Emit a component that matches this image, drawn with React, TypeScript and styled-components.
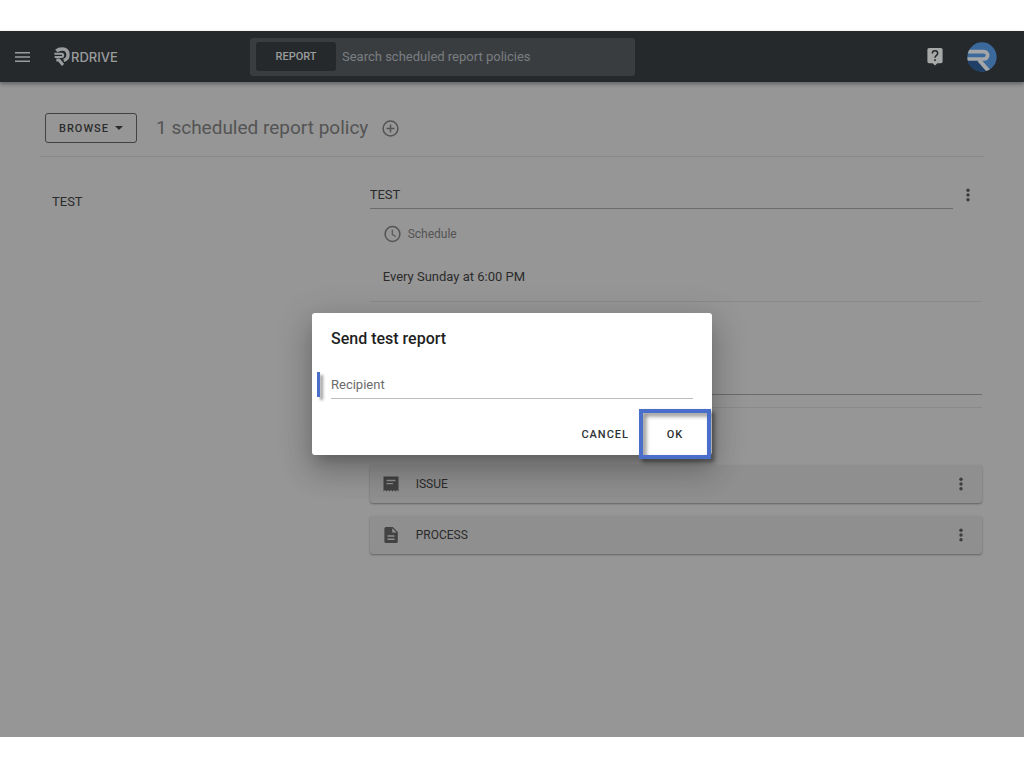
import React from 'react';
import styled, { createGlobalStyle } from 'styled-components';

const color = {
  page: '#969696',
  bar: '#25292c',
  barField: '#393d40',
  barText: '#9b9c9d',
  barHint: '#7b7e80',
  text: '#2b2b2b',
  muted: '#545454',
  rule: '#8a8a8a',
  fieldLine: '#6c6c6c',
  card: '#8f8f8f',
  accent: '#4a6fcb',
};

const GlobalStyle = createGlobalStyle`
  *, *::before, *::after { box-sizing: border-box; }
  body { margin: 0; background: #ffffff; }
  body, button, input { font-family: Roboto, "Liberation Sans", sans-serif; }
  h1, h2, p, ul { margin: 0; padding: 0; font-weight: 400; }
  ul { list-style: none; }
`;

const Frame = styled.div`
  position: relative;
  display: flex;
  flex-direction: column;
  min-height: calc(100vh - 62px);
  margin: 31px 0;
  background: ${color.page};
  color: ${color.text};
`;

const AppBar = styled.header`
  display: flex;
  align-items: center;
  height: 51px;
  padding: 0 27px 0 15px;
  background: ${color.bar};
  box-shadow: 0 2px 4px rgba(0, 0, 0, 0.35);
`;

const Brand = styled.div`
  display: flex;
  align-items: center;
  flex: 0 0 235px;
  gap: 24px;
`;

const IconButton = styled.button<{ $tone?: string }>`
  display: flex;
  align-items: center;
  justify-content: center;
  padding: 0;
  border: 0;
  background: none;
  color: ${(p) => p.$tone ?? color.muted};
`;

const Logo = styled.a`
  display: flex;
  align-items: center;
  color: ${color.barText};
  font: 500 13px/20px Inter, Roboto, sans-serif;
  text-decoration: none;
`;

const SearchBox = styled.div`
  display: flex;
  align-items: center;
  flex: 0 1 385px;
  height: 38px;
  padding: 0 6px;
  gap: 6px;
  border-radius: 3px;
  background: ${color.barField};
`;

const ScopeButton = styled.button`
  flex: none;
  width: 80px;
  height: 29px;
  padding: 0;
  border: 0;
  border-radius: 3px;
  background: ${color.bar};
  color: ${color.barText};
  font-size: 11px;
  font-weight: 500;
`;

const SearchInput = styled.input`
  flex: 1;
  min-width: 0;
  padding: 0;
  border: 0;
  outline: 0;
  background: none;
  color: ${color.barText};
  font-size: 13px;
  &::placeholder { color: ${color.barHint}; opacity: 1; }
`;

const BarActions = styled.div`
  display: flex;
  align-items: center;
  gap: 24px;
  margin-left: auto;
`;

const Main = styled.main`
  flex: 1;
  padding: 0 40px 24px;
`;

const Toolbar = styled.div`
  display: flex;
  align-items: center;
  height: 75px;
  padding: 18px 5px 0;
  border-bottom: 1px solid ${color.rule};
`;

const BrowseButton = styled.button`
  display: flex;
  align-items: center;
  justify-content: center;
  gap: 6px;
  width: 92px;
  height: 30px;
  padding: 0;
  border: 1px solid #424242;
  border-radius: 3px;
  background: none;
  color: ${color.text};
  font-size: 11px;
  font-weight: 500;
  letter-spacing: 1px;
`;

const PageTitle = styled.h1`
  margin: 0 14px 0 19px;
  color: ${color.muted};
  font-size: 19px;
  line-height: 24px;
`;

const Columns = styled.div`
  display: grid;
  grid-template-columns: 35% minmax(0, 1fr);
  padding-right: 2px;
`;

const PolicyList = styled.ul`
  padding: 35px 12px 0;
  font-size: 13px;
  line-height: 20px;
`;

const Detail = styled.section`
  padding-top: 23px;
`;

const NameRow = styled.div`
  display: flex;
  align-items: center;
  padding-right: 10px;
  gap: 11px;
`;

const NameInput = styled.input`
  flex: 1;
  min-width: 0;
  height: 29px;
  padding: 0;
  border: 0;
  border-bottom: 1px solid ${color.fieldLine};
  border-radius: 0;
  outline: 0;
  background: none;
  color: ${color.text};
  font-size: 13px;
`;

const Section = styled.div`
  height: 93px;
  padding: 14px 13px 0;
  border-bottom: 1px solid ${color.rule};
`;

const SectionLabel = styled.h2`
  display: flex;
  align-items: center;
  gap: 6px;
  height: 22px;
  color: ${color.muted};
  font-size: 12px;
`;

const SectionText = styled.p`
  margin-top: 22px;
  font-size: 13px;
  line-height: 20px;
`;

const RecipientSection = styled.div`
  height: 106px;
  padding-bottom: 12px;
  border-bottom: 1px solid ${color.rule};
`;

const RecipientLine = styled.div`
  height: 93px;
  border-bottom: 1px solid ${color.fieldLine};
`;

const CardList = styled.ul`
  display: flex;
  flex-direction: column;
  gap: 13px;
  padding-top: 57px;
`;

const Card = styled.li`
  display: flex;
  align-items: center;
  height: 38px;
  padding: 0 17px 0 12px;
  border-radius: 3px;
  background: ${color.card};
  box-shadow: 0 1px 2px rgba(0, 0, 0, 0.35);
  font-size: 12px;
`;

const CardLabel = styled.span`
  flex: 1;
  margin-left: 16px;
`;

const Scrim = styled.div`
  position: absolute;
  inset: 0;
  display: flex;
  align-items: center;
  justify-content: center;
`;

const Dialog = styled.form`
  width: 400px;
  height: 142px;
  padding: 14px 1px 0 19px;
  border-radius: 3px;
  background: #ffffff;
  box-shadow: 0 9px 12px -5px rgba(0, 0, 0, 0.2), 0 18px 28px 2px rgba(0, 0, 0, 0.14),
    0 7px 34px 6px rgba(0, 0, 0, 0.12);
`;

const DialogTitle = styled.h2`
  color: #1f1f1f;
  font-size: 16px;
  font-weight: 500;
  line-height: 24px;
`;

const RecipientField = styled.label`
  position: relative;
  display: block;
  margin: 20px 18px 0 0;
  &::before {
    content: '';
    position: absolute;
    left: -14px;
    top: 1px;
    width: 3px;
    height: 25px;
    background: ${color.accent};
    box-shadow: 3px 3px 3px rgba(0, 0, 0, 0.4);
  }
`;

const RecipientInput = styled.input`
  display: block;
  width: 100%;
  height: 28px;
  padding: 0;
  border: 0;
  border-bottom: 1px solid #bdbdbd;
  border-radius: 0;
  outline: 0;
  background: none;
  font-size: 13px;
  &::placeholder { color: #6b6b6b; opacity: 1; }
`;

const DialogActions = styled.div`
  display: flex;
  align-items: center;
  justify-content: flex-end;
  gap: 10px;
  padding-top: 10px;
`;

const DialogButton = styled.button<{ $marked?: boolean }>`
  position: relative;
  width: ${(p) => (p.$marked ? '72px' : 'auto')};
  height: 50px;
  padding: 1px 0 0;
  border: 0;
  background: none;
  color: #2d3134;
  font-size: 11px;
  font-weight: 500;
  letter-spacing: 1px;
  &::after {
    content: '';
    display: ${(p) => (p.$marked ? 'block' : 'none')};
    position: absolute;
    inset: 0;
    border: 4px solid ${color.accent};
    filter: drop-shadow(3px 3px 2px rgba(0, 0, 0, 0.5));
  }
`;

const MenuIcon = () => (
  <svg width="15" height="12" viewBox="0 0 15 12" fill="currentColor" aria-hidden="true">
    <path d="M0 1h15v1.6H0zM0 5.2h15v1.6H0zM0 9.4h15v1.6H0z" />
  </svg>
);

const LogoMark = () => (
  <svg width="17" height="20" viewBox="0 0 51 60" fill="none" stroke="currentColor" aria-hidden="true">
    <path d="M7 12C12 7 18 6 25 6C37 6 42 14 42 24C42 33 37 38 29 40" strokeWidth="10" />
    <path d="M1 20H23C29 20 29 30 23 30H2" strokeWidth="6" />
    <path d="M7 39H15L27 54" strokeWidth="9" />
  </svg>
);

const HelpIcon = () => (
  <svg width="16" height="18" viewBox="0 0 16 18" aria-hidden="true">
    <path d="M2 0h12a1.6 1.6 0 0 1 1.6 1.6v12a1.6 1.6 0 0 1-1.6 1.6h-3.6L8 17.6l-2.400-2.400H2A1.600 1.600 0 0 1 .4 13.600v-12A1.600 1.600 0 0 1 2 0z" fill="#a7a8a8" />
    <path d="M5.300 5.400a2.700 2.700 0 0 1 5.400 0c0 1.900-2.700 2-2.700 4.300" fill="none" stroke="#25292c" strokeWidth="1.500" />
    <path d="M7.200 11.300h1.600v1.600H7.200z" fill="#25292c" />
  </svg>
);

const Avatar = () => (
  <svg width="30" height="30" viewBox="0 0 90 90" aria-hidden="true">
    <defs>
      <clipPath id="avatar-disc"><circle cx="45" cy="45" r="44" /></clipPath>
    </defs>
    <g clipPath="url(#avatar-disc)">
      <rect width="90" height="90" fill="#3c699c" />
      <path d="M0 50H36L68 90H0z" fill="#1f3f66" />
      <path d="M0 29H50C66 29 66 51 50 51H0" fill="none" stroke="#a5a6a7" strokeWidth="11" />
      <path d="M36 54L65 87" stroke="#a5a6a7" strokeWidth="12" />
    </g>
  </svg>
);

const CaretIcon = () => (
  <svg width="8" height="4" viewBox="0 0 8 4" fill="currentColor" aria-hidden="true">
    <path d="M0 0h8L4 4z" />
  </svg>
);

const AddIcon = () => (
  <svg width="17" height="17" viewBox="0 0 17 17" fill="none" stroke="currentColor" strokeWidth="1.500" aria-hidden="true">
    <circle cx="8.500" cy="8.500" r="7.400" />
    <path d="M8.500 4.500v8M4.500 8.500h8" />
  </svg>
);

const ClockIcon = () => (
  <svg width="19" height="18" viewBox="0 0 19 18" fill="none" stroke="currentColor" strokeWidth="1.500" aria-hidden="true">
    <circle cx="9.500" cy="9" r="7.400" />
    <path d="M9.300 4.800v4.600l3.300 2" strokeWidth="1.200" />
  </svg>
);

const MoreIcon = () => (
  <svg width="8" height="14" viewBox="0 0 8 14" fill="#3d3d3d" aria-hidden="true">
    <circle cx="4" cy="2.200" r="1.700" />
    <circle cx="4" cy="7" r="1.700" />
    <circle cx="4" cy="11.800" r="1.700" />
  </svg>
);

const IssueIcon = () => (
  <svg width="18" height="18" viewBox="0 0 18 18" aria-hidden="true">
    <path d="M1.500 1.500h15v15l-1.500-1.500-1.500 1.500-1.500-1.500-1.500 1.500-1.500-1.500-1.500 1.500-1.500-1.500-1.500 1.500-1.500-1.500-1.500 1.500z" fill="#424242" />
    <path d="M4.500 5.500h9M4.500 8.600h6.500" stroke="#8f8f8f" strokeWidth="1.400" />
  </svg>
);

const ProcessIcon = () => (
  <svg width="18" height="18" viewBox="0 0 18 18" aria-hidden="true">
    <path d="M4 1h6.800l5 5v9.400a1.600 1.600 0 0 1-1.600 1.600H4a1.600 1.600 0 0 1-1.600-1.600V2.600A1.600 1.600 0 0 1 4 1z" fill="#424242" />
    <path d="M10.200 2.200v4.400h4.400z" fill="#8f8f8f" />
    <path d="M5.500 10h7M5.500 13.200h7" stroke="#8f8f8f" strokeWidth="1.400" />
  </svg>
);

const policyItems = [
  { name: 'ISSUE', Icon: IssueIcon },
  { name: 'PROCESS', Icon: ProcessIcon },
];

export default function App() {
  return (
    <Frame>
      <GlobalStyle />
      <AppBar>
        <Brand>
          <IconButton type="button" aria-label="Menu" $tone={color.barText}><MenuIcon /></IconButton>
          <Logo href="#"><LogoMark />RDRIVE</Logo>
        </Brand>
        <SearchBox role="search">
          <ScopeButton type="button">REPORT</ScopeButton>
          <SearchInput aria-label="Search" placeholder="Search scheduled report policies" />
        </SearchBox>
        <BarActions>
          <IconButton type="button" aria-label="Help"><HelpIcon /></IconButton>
          <IconButton type="button" aria-label="Account"><Avatar /></IconButton>
        </BarActions>
      </AppBar>

      <Main>
        <Toolbar>
          <BrowseButton type="button">BROWSE<CaretIcon /></BrowseButton>
          <PageTitle>1 scheduled report policy</PageTitle>
          <IconButton type="button" aria-label="Add policy"><AddIcon /></IconButton>
        </Toolbar>
        <Columns>
          <PolicyList><li>TEST</li></PolicyList>
          <Detail>
            <NameRow>
              <NameInput aria-label="Policy name" defaultValue="TEST" />
              <IconButton type="button" aria-label="Policy actions"><MoreIcon /></IconButton>
            </NameRow>
            <Section>
              <SectionLabel><ClockIcon />Schedule</SectionLabel>
              <SectionText>Every Sunday at 6:00 PM</SectionText>
            </Section>
            <RecipientSection><RecipientLine /></RecipientSection>
            <CardList>
              {policyItems.map(({ name, Icon }) => (
                <Card key={name}>
                  <Icon />
                  <CardLabel>{name}</CardLabel>
                  <IconButton type="button" aria-label={`${name} actions`}><MoreIcon /></IconButton>
                </Card>
              ))}
            </CardList>
          </Detail>
        </Columns>
      </Main>

      <Scrim>
        <Dialog role="dialog" aria-modal="true" aria-labelledby="dialog-title">
          <DialogTitle id="dialog-title">Send test report</DialogTitle>
          <RecipientField>
            <RecipientInput aria-label="Recipient" placeholder="Recipient" />
          </RecipientField>
          <DialogActions>
            <DialogButton type="button">CANCEL</DialogButton>
            <DialogButton type="button" $marked>OK</DialogButton>
          </DialogActions>
        </Dialog>
      </Scrim>
    </Frame>
  );
}
